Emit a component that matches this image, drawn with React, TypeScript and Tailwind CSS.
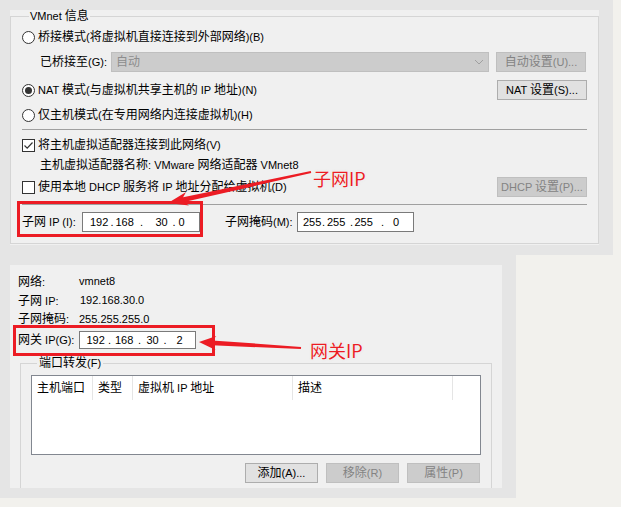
import React from "react";

const RED = "#ec1c24";
const CJK = /([\u2E80-\u9FFF\uFF00-\uFFEF]+)/;

// latin runs stay at the base 11px, cjk runs are bumped to 12px like the dialog font
function T({ s }: { s: string }) {
  return (
    <span>
      {s.split(CJK).map((p, i) =>
        i % 2 ? (
          <span key={i} className="text-[12px]">
            {p}
          </span>
        ) : (
          p
        )
      )}
    </span>
  );
}

function Radio({ checked, label }: { checked?: boolean; label: string }) {
  return (
    <div className="flex items-center h-[20px]">
      <span className="w-[13px] h-[13px] rounded-full border border-[#333] bg-white flex items-center justify-center">
        {checked && <span className="w-[7px] h-[7px] rounded-full bg-[#333]" />}
      </span>
      <span className="ml-[3px]">
        <T s={label} />
      </span>
    </div>
  );
}

function Checkbox({ checked, label }: { checked?: boolean; label: string }) {
  return (
    <div className="flex items-center h-[20px]">
      <span className="w-[13px] h-[13px] border border-[#333] bg-white flex items-center justify-center">
        {checked && (
          <svg width="11" height="11" viewBox="0 0 11 11">
            <path d="M1.5 5.5 L4.2 8.2 L9.5 2.5" fill="none" stroke="#333" strokeWidth="1.2" />
          </svg>
        )}
      </span>
      <span className="ml-[3px]">
        <T s={label} />
      </span>
    </div>
  );
}

function Btn({ label, disabled, w = "w-[90px]" }: { label: string; disabled?: boolean; w?: string }) {
  return (
    <div
      className={`${w} h-[20px] flex items-center justify-center border ${
        disabled ? "bg-[#cccccc] border-[#bfbfbf] text-[#838383]" : "bg-[#e1e1e1] border-[#adadad] text-black"
      }`}
    >
      <T s={label} />
    </div>
  );
}

// ip control: each part is [text, x offset from the box's left edge]
function IpBox({ parts, w, h = "h-[20px]" }: { parts: [string, number][]; w: string; h?: string }) {
  return (
    <div className={`${w} ${h} bg-white border border-[#7a7a7a] flex items-center`}>
      {parts.map(([t, x], i) => {
        const next = parts[i + 1];
        const width = next ? next[1] - x : undefined;
        return (
          <span
            key={i}
            className="whitespace-pre shrink-0"
            style={{ marginLeft: i === 0 ? x - 1 : 0, width }}
          >
            {t}
          </span>
        );
      })}
    </div>
  );
}

function arrowPoints(tip: [number, number], tail: [number, number], headLen: number, headW: number, s0: number, s1: number) {
  const dx = tail[0] - tip[0];
  const dy = tail[1] - tip[1];
  const len = Math.hypot(dx, dy);
  const ux = dx / len, uy = dy / len;
  const nx = -uy, ny = ux;
  const bx = tip[0] + ux * headLen, by = tip[1] + uy * headLen;
  const ix = tip[0] + ux * (headLen - 4), iy = tip[1] + uy * (headLen - 4);
  const pts = [
    [tip[0], tip[1]],
    [bx + nx * headW, by + ny * headW],
    [ix + nx * s0, iy + ny * s0],
    [tail[0] + nx * s1, tail[1] + ny * s1],
    [tail[0] - nx * s1, tail[1] - ny * s1],
    [ix - nx * s0, iy - ny * s0],
    [bx - nx * headW, by - ny * headW],
  ];
  return pts.map((p) => `${p[0].toFixed(1)},${p[1].toFixed(1)}`).join(" ");
}

export default function App() {
  return (
    <div className="relative w-[621px] h-[507px] overflow-hidden bg-[#f2f1ed] text-[11px] text-black font-['Liberation_Sans','Noto_Sans_CJK_SC',sans-serif]">
      {/* top capture: VMnet info */}
      <div className="w-[613px] h-[255px] bg-[#e5e5e5] pt-[10px] pl-[10px]">
        <div className="w-[589px] h-[235px] bg-[#f0f0f0]">
          <fieldset className="w-[589px] h-[234px] border border-[#d5d5d5] px-[11px]">
            <legend className="ml-[7px] px-[1px] leading-[12px]">
              <T s="VMnet 信息" />
            </legend>
            <div className="pt-[5px] flex flex-col">
              <Radio label="桥接模式(将虚拟机直接连接到外部网络)(B)" />
              <div className="mt-[5px] flex items-center h-[20px]">
                <span className="ml-[18px] w-[71px]">
                  <T s="已桥接至(G):" />
                </span>
                <div className="w-[378px] h-[20px] bg-[#cccccc] border border-[#bfbfbf] flex items-center justify-between px-[4px] text-[#8d8d8d]">
                  <T s="自动" />
                  <svg width="10" height="6" viewBox="0 0 10 6">
                    <path d="M1 1 L5 5 L9 1" fill="none" stroke="#a0a0a0" strokeWidth="1" />
                  </svg>
                </div>
                <div className="ml-[7px]">
                  <Btn label="自动设置(U)..." disabled />
                </div>
              </div>
              <div className="mt-[8px] flex items-center justify-between h-[20px]">
                <Radio checked label="NAT 模式(与虚拟机共享主机的 IP 地址)(N)" />
                <Btn label="NAT 设置(S)..." />
              </div>
              <div className="mt-[5px]">
                <Radio label="仅主机模式(在专用网络内连接虚拟机)(H)" />
              </div>
              <div className="mt-[4px] h-px bg-[#a0a0a0]" />
              <div className="mt-[5px]">
                <Checkbox checked label="将主机虚拟适配器连接到此网络(V)" />
              </div>
              <div className="h-[20px] flex items-center pl-[18px]">
                <T s="主机虚拟适配器名称: VMware 网络适配器 VMnet8" />
              </div>
              <div className="mt-[2px] flex items-center justify-between h-[20px]">
                <Checkbox label="使用本地 DHCP 服务将 IP 地址分配给虚拟机(D)" />
                <Btn label="DHCP 设置(P)..." disabled />
              </div>
              <div className="mt-[7px] h-px bg-[#a0a0a0]" />
              <div className="mt-[7px] flex items-center h-[20px]">
                <span className="w-[60px]">
                  <T s="子网 IP (I):" />
                </span>
                <IpBox
                  w="w-[118px]"
                  parts={[["192", 8], [".", 28.5], ["168", 33.5], [".", 58], ["30", 73.5], [".", 90.5], ["0", 96.5]]}
                />
                <span className="ml-[25px] w-[72px]">
                  <T s="子网掩码(M):" />
                </span>
                <IpBox
                  w="w-[117px]"
                  parts={[["255", 6], [".", 25], ["255", 30], [".", 53], ["255", 57.5], [".", 84], ["0", 96]]}
                />
              </div>
            </div>
          </fieldset>
        </div>
      </div>

      {/* bottom capture: NAT settings */}
      <div className="w-[516px] h-[243px] bg-[#e5e5e5] pt-[10px] pl-[10px]">
        <div className="w-[492px] h-[223px] bg-[#f0f0f0] overflow-hidden pt-[7px]">
          <div className="pl-[8px]">
            <div className="flex items-center h-[19px]">
              <span className="w-[61px]">
                <T s="网络:" />
              </span>
              <span>vmnet8</span>
            </div>
            <div className="flex items-center h-[19px]">
              <span className="w-[62px]">
                <T s="子网 IP:" />
              </span>
              <span>192.168.30.0</span>
            </div>
            <div className="flex items-center h-[18px]">
              <span className="w-[61px]">
                <T s="子网掩码:" />
              </span>
              <span>255.255.255.0</span>
            </div>
            <div className="mt-[3px] flex items-center h-[18px]">
              <span className="w-[61px]">
                <T s="网关 IP(G):" />
              </span>
              <IpBox
                w="w-[117px]"
                h="h-[18px]"
                parts={[["192", 7.5], [".", 29], ["168", 36], [".", 59], ["30", 67.5], [".", 84.5], ["2", 97.5]]}
              />
            </div>
          </div>
          <fieldset className="mt-[7px] ml-[10px] w-[472px] h-[150px] border border-[#d5d5d5] px-[10px]">
            <legend className="ml-[6px] px-[2px] leading-[14px]">
              <T s="端口转发(F)" />
            </legend>
            <div className="pt-[5px]">
              <div className="w-[450px] h-[80px] bg-white border border-[#828790]">
                <div className="flex h-[24px]">
                  <div className="w-[61px] border-r border-[#e5e5e5] pl-[5px] flex items-center">
                    <T s="主机端口" />
                  </div>
                  <div className="w-[40px] border-r border-[#e5e5e5] pl-[5px] flex items-center">
                    <T s="类型" />
                  </div>
                  <div className="w-[160px] border-r border-[#e5e5e5] pl-[5px] flex items-center">
                    <T s="虚拟机 IP 地址" />
                  </div>
                  <div className="w-[160px] border-r border-[#e5e5e5] pl-[5px] flex items-center">
                    <T s="描述" />
                  </div>
                </div>
              </div>
              <div className="mt-[8px] flex justify-end gap-[8px] pr-[1px]">
                <Btn label="添加(A)..." w="w-[73px]" />
                <Btn label="移除(R)" w="w-[73px]" disabled />
                <Btn label="属性(P)" w="w-[73px]" disabled />
              </div>
            </div>
          </fieldset>
        </div>
      </div>

      {/* annotations */}
      <div className="absolute left-[17px] top-[201px] w-[186px] h-[36px] border-[3px] border-[#ec1c24]" />
      <div className="absolute left-[13px] top-[325px] w-[202px] h-[31px] border-[3px] border-[#ec1c24]" />
      <svg className="absolute left-0 top-0 pointer-events-none" width="621" height="507">
        <polygon points={arrowPoints([168, 203], [311, 172], 20, 7, 2.4, 1.1)} fill={RED} />
        <polygon points={arrowPoints([199, 342], [301, 348], 17, 7, 2.4, 1.1)} fill={RED} />
      </svg>
      <div className="absolute left-[313px] top-[166px] font-['Noto_Sans_CJK_SC',sans-serif] text-[18px] leading-[24px] text-[#ec1c24] [text-shadow:0_0_2px_#fff,0_0_3px_#ddd]">
        子网IP
      </div>
      <div className="absolute left-[310px] top-[338px] font-['Noto_Sans_CJK_SC',sans-serif] text-[18px] leading-[24px] text-[#ec1c24] [text-shadow:0_0_2px_#fff,0_0_3px_#ddd]">
        网关IP
      </div>
    </div>
  );
}
